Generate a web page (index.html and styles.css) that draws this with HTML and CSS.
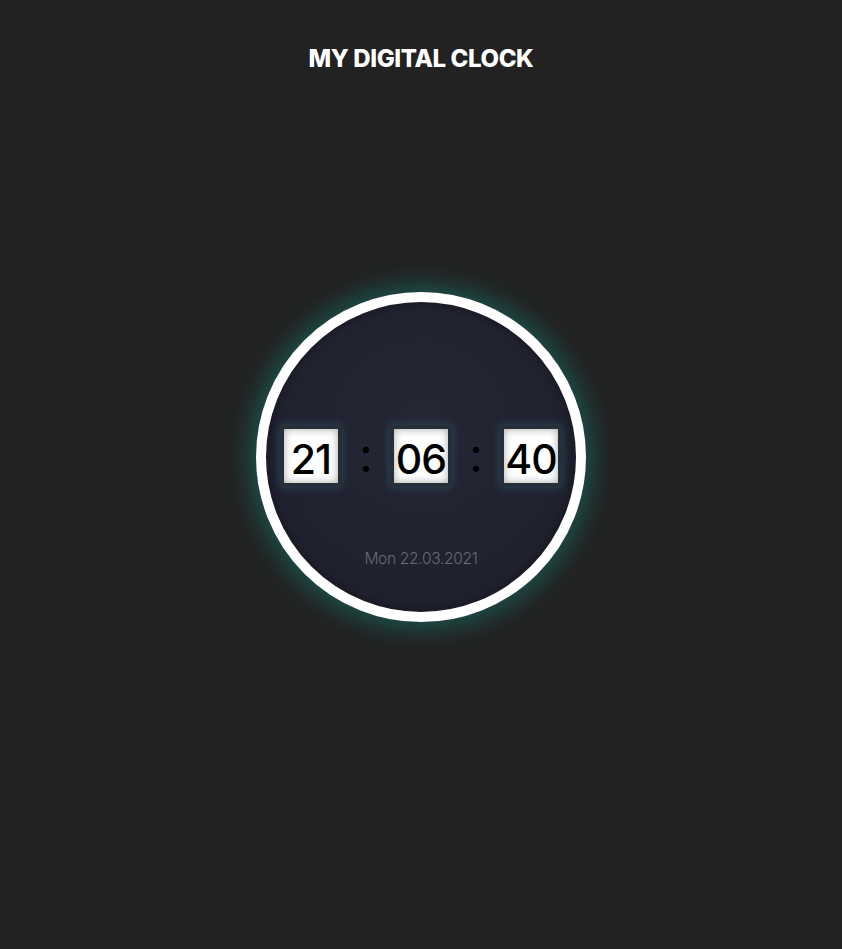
FILE: index.html
```html
<!DOCTYPE html>
<html>
<head>
<meta charset="utf-8">
<link rel="stylesheet" href="styles.css">
</head>
<body>
<h1 class="title">MY DIGITAL CLOCK</h1>
<main class="stage">
  <div class="clock">
    <div class="time">
      <div class="box">21</div>
      <span class="colon">:</span>
      <div class="box">06</div>
      <span class="colon">:</span>
      <div class="box">40</div>
    </div>
    <div class="date">Mon 22.03.2021</div>
  </div>
</main>
</body>
</html>
```
FILE: styles.css
```css
html, body {
  margin: 0;
  padding: 0;
  background: #222222;
  height: 100%;
}
body {
  font-family: "Inter", "Noto Sans", sans-serif;
  display: flex;
  flex-direction: column;
  align-items: center;
}
.title {
  margin: 44px 0 0;
  color: #ffffff;
  font-size: 24px;
  font-weight: 800;
  letter-spacing: -0.4px;
  line-height: 30px;
}
.stage {
  margin-top: 218px;
  display: flex;
  justify-content: center;
}
.clock {
  box-sizing: border-box;
  width: 330px;
  height: 330px;
  border-radius: 50%;
  border: 10px solid #ffffff;
  background: radial-gradient(circle at 50% 40%, #252734 0%, #212230 60%, #1e1f2b 100%);
  box-shadow: 0 0 26px 6px rgba(22, 120, 110, 0.6), inset 0 0 12px rgba(0,0,0,0.4);
  display: flex;
  flex-direction: column;
  align-items: center;
}
.time {
  margin-top: 123px;
  display: flex;
  align-items: center;
}
.box {
  box-sizing: border-box;
  width: 62px;
  height: 62px;
  border: 4px solid #262f37;
  background: #ffffff;
  box-shadow: inset 0 0 8px rgba(0,0,0,0.35), 0 0 8px rgba(40, 140, 160, 0.4);
  display: flex;
  align-items: center;
  justify-content: center;
  color: #000000;
  font-size: 41px;
  font-weight: 500;
  letter-spacing: -1px;
  padding-top: 5px;
}
.colon {
  width: 48px;
  text-align: center;
  color: #000000;
  font-size: 48px;
  font-weight: 400;
  line-height: 1;
  margin-top: -3px;
}
.date {
  margin-top: 62px;
  color: #6a6b74;
  font-size: 15.5px;
  font-weight: 300;
  letter-spacing: -0.3px;
}
```
